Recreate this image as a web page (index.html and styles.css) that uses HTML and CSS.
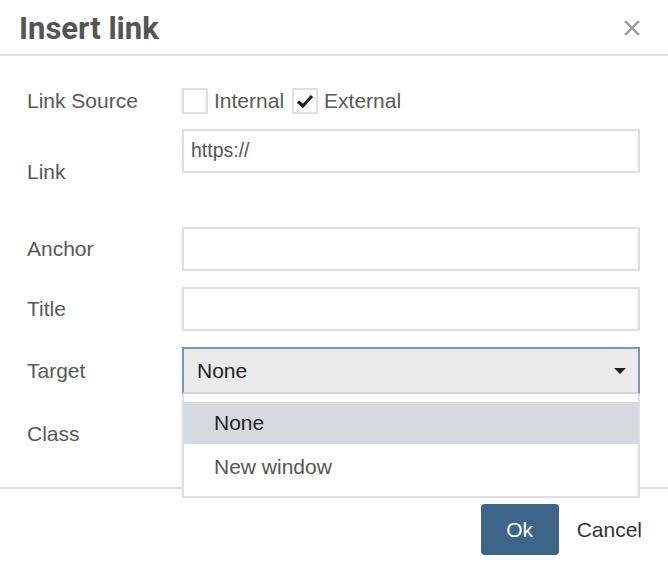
FILE: index.html
```html
<!DOCTYPE html>
<html>
<head>
<meta charset="utf-8">
<link rel="stylesheet" href="styles.css">
</head>
<body>
<div class="dialog">
  <div class="header">
    <h1 class="title">Insert link</h1>
    <span class="close">
      <svg width="18" height="18" viewBox="0 0 18 18"><path d="M2 2 L16 16 M16 2 L2 16" stroke="#9a9a9a" stroke-width="2.4" fill="none"/></svg>
    </span>
  </div>
  <div class="body">
    <div class="row row-source">
      <div class="label">Link Source</div>
      <div class="control checks">
        <span class="box"></span><span class="check-label">Internal</span>
        <span class="box checked">
          <svg width="18" height="16" viewBox="0 0 18 16"><path d="M2 8.5 L6.8 13 L16 3" stroke="#222" stroke-width="3.2" fill="none"/></svg>
        </span><span class="check-label">External</span>
      </div>
    </div>
    <div class="row row-link">
      <div class="label label-bottom">Link</div>
      <div class="control"><div class="input input-top">https://</div></div>
    </div>
    <div class="row row-anchor">
      <div class="label">Anchor</div>
      <div class="control"><div class="input"></div></div>
    </div>
    <div class="row row-title">
      <div class="label">Title</div>
      <div class="control"><div class="input"></div></div>
    </div>
    <div class="row row-target">
      <div class="label">Target</div>
      <div class="control select-wrap">
        <div class="select"><span>None</span><span class="caret"></span></div>
        <div class="menu">
          <div class="option active">None</div>
          <div class="option">New window</div>
        </div>
      </div>
    </div>
    <div class="row row-class">
      <div class="label">Class</div>
      <div class="control"><div class="input"></div></div>
    </div>
  </div>
  <div class="footer">
    <button class="btn-ok">Ok</button>
    <button class="btn-cancel">Cancel</button>
  </div>
</div>
</body>
</html>
```
FILE: styles.css
```css
* { box-sizing: border-box; }
html, body { margin: 0; padding: 0; background: #fff; }
body { font-family: "Liberation Sans", Arial, sans-serif; color: #555; }
.dialog { width: 668px; height: 566px; overflow: hidden; position: relative; }
.header {
  height: 56px;
  border-bottom: 2px solid #dcdfe3;
  display: flex;
  align-items: center;
  justify-content: space-between;
  padding: 0 27px 0 19px;
}
.title {
  margin: 0;
  font-family: Roboto, "Liberation Sans", sans-serif;
  font-weight: 700;
  font-size: 31px;
  color: #555;
  line-height: 1;
  padding-top: 2px;
}
.close { display: flex; padding-top: 2px; }
.body { padding: 32px 28px 0 27px; height: 433px; border-bottom: 2px solid #dcdfe3; }
.row { display: flex; }
.label { width: 155px; font-size: 21px; line-height: 24px; color: #595959; align-self: center; }
.control { width: 458px; }
.row-source { height: 26px; margin-bottom: 15px; }
.checks { display: flex; align-items: center; font-size: 21px; }
.box {
  width: 26px; height: 26px; border: 2px solid #dcdfe3; display: inline-flex;
  align-items: center; justify-content: center;
}
.check-label { margin: 0 8px 0 6px; color: #595959; }
.row-link { height: 55px; margin-bottom: 43px; }
.label-bottom { align-self: flex-end; }
.input { height: 44px; border: 2px solid #dcdfe3; background: #fff; }
.input-top { font-size: 19.5px; color: #555; padding: 8px 0 0 7px; line-height: 22px; }
.row-anchor, .row-title { height: 44px; margin-bottom: 16px; }
.row-target { height: 47px; margin-bottom: 18px; position: relative; z-index: 2; }
.select-wrap { position: relative; }
.select {
  height: 47px;
  background: #ebebeb;
  border: 2px solid #7a98b3;
  border-bottom: 2px solid #d0d5db;
  display: flex; align-items: center; justify-content: space-between;
  padding: 0 12px 0 13px;
  font-size: 21px; color: #222;
}
.caret {
  width: 0; height: 0;
  border-left: 6px solid transparent; border-right: 6px solid transparent;
  border-top: 6px solid #222;
}
.menu {
  position: absolute; left: 0; top: 47px; width: 458px;
  background: #fff;
  border: 2px solid #dcdfe3; border-top: none;
  padding: 8px 0 7px 0;
}
.option { height: 42px; line-height: 42px; padding-left: 30px; font-size: 21px; color: #555; margin-bottom: 1px; }
.option.active { background: #d5dae1; color: #222; margin-bottom: 2px; }
.row-class { height: 44px; }
.footer {
  display: flex; justify-content: flex-end; align-items: center;
  padding: 15px 26px 0 0;
}
.btn-ok {
  width: 78px; height: 51px; border: none; border-radius: 4px;
  background: #3d6589; color: #fff; font-family: "Liberation Sans", Arial, sans-serif;
  font-size: 21px;
}
.btn-cancel {
  border: none; background: none; margin-left: 18px; padding: 0;
  font-family: "Liberation Sans", Arial, sans-serif; font-size: 21px; color: #333;
}
```
